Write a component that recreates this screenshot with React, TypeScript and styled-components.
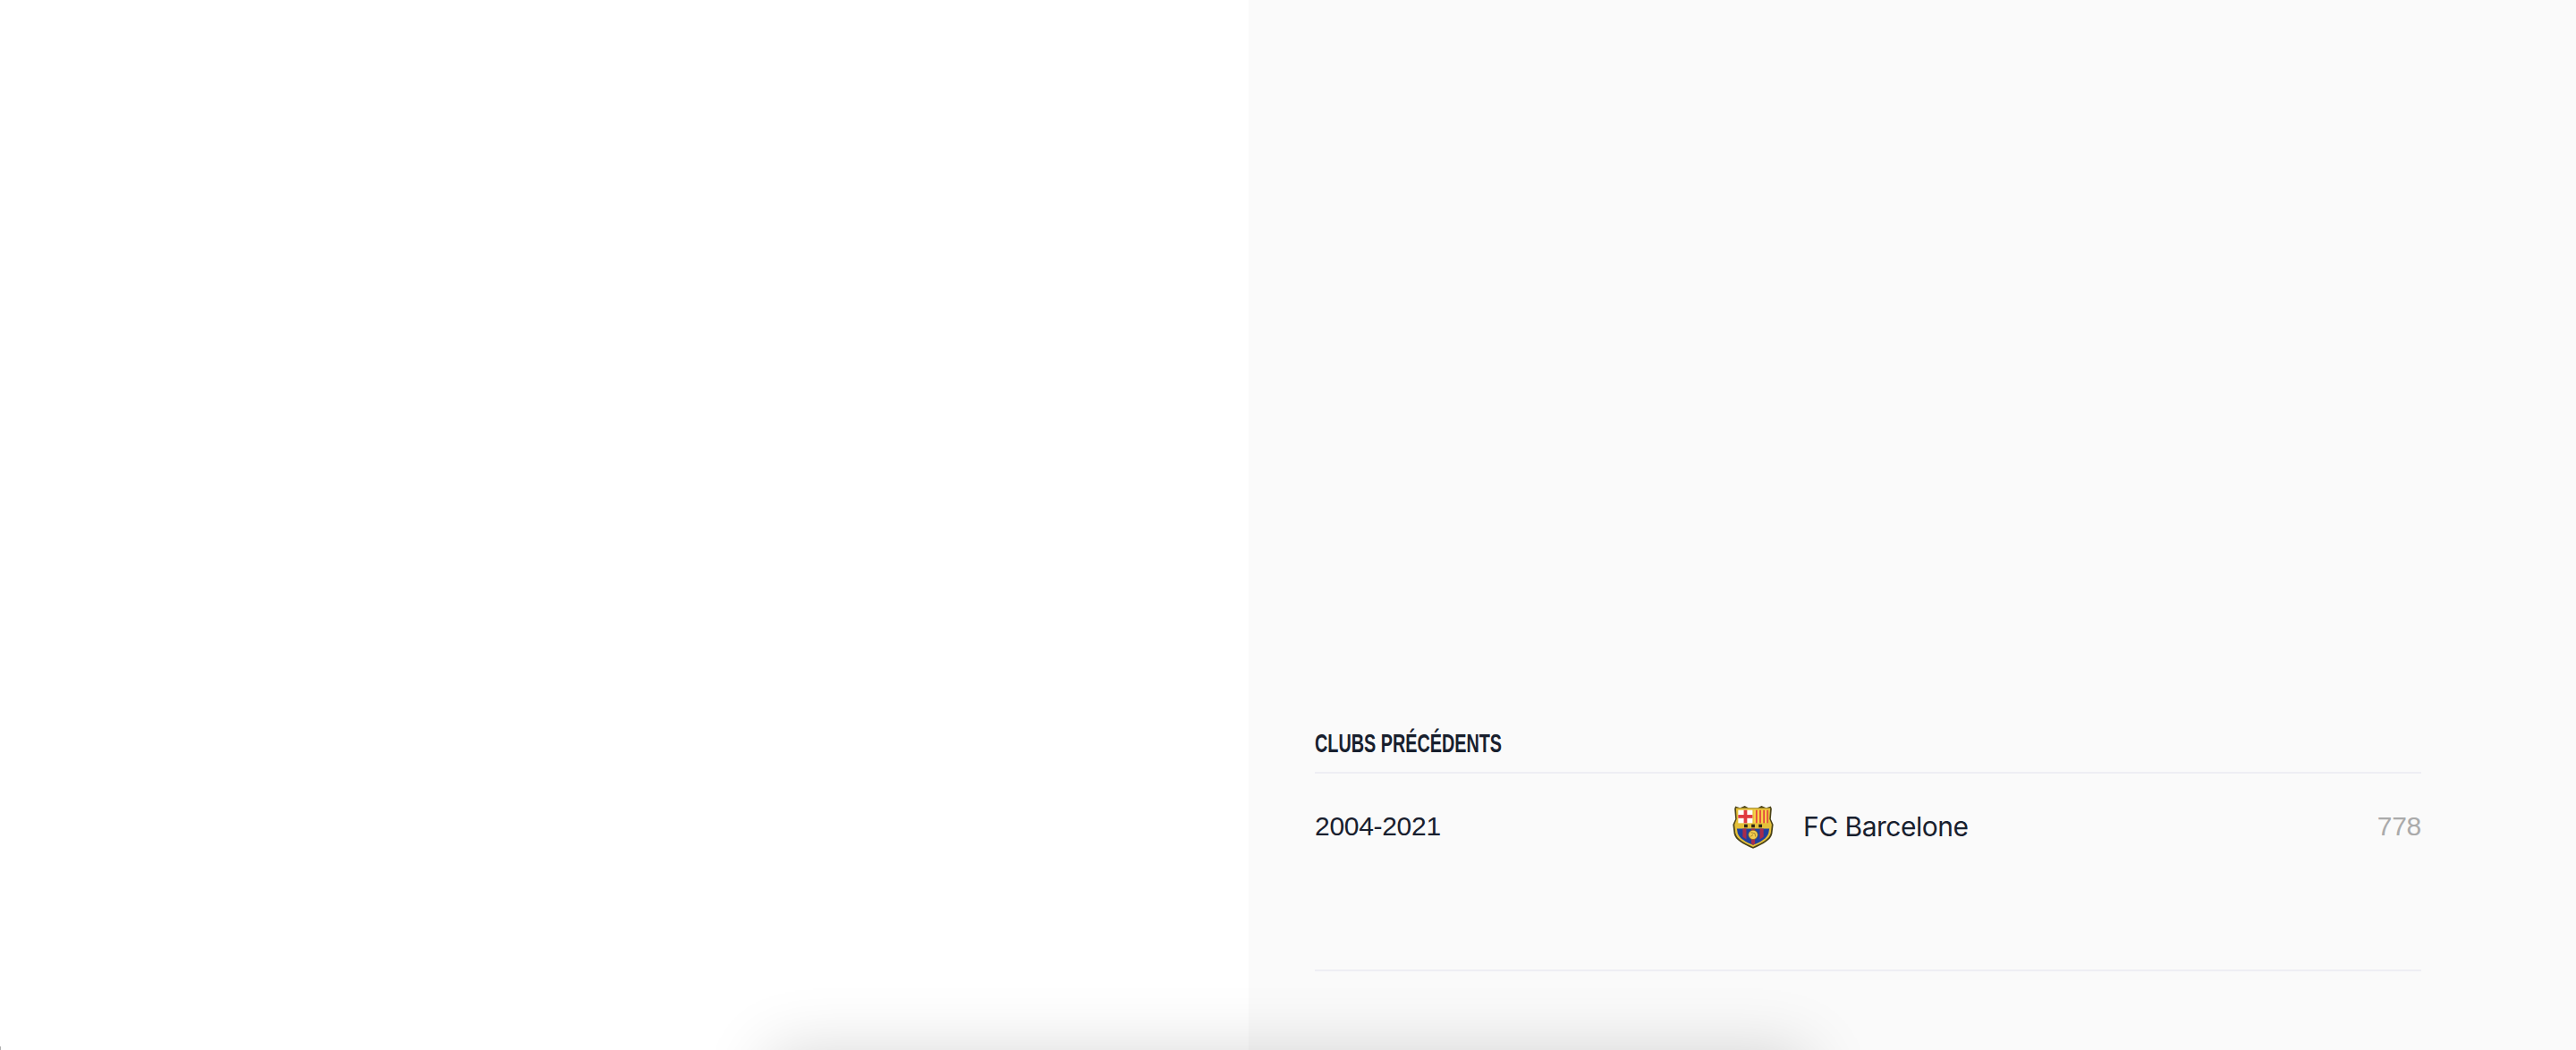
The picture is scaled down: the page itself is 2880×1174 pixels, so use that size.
import styled, { createGlobalStyle } from "styled-components";

const GlobalStyle = createGlobalStyle`
  html, body {
    margin: 0;
    padding: 0;
    background: #fff;
  }
  body {
    font-family: Inter, "Liberation Sans", sans-serif;
  }
`;

const BarcaCrest = () => (
  <CrestSvg viewBox="0 0 44 47" aria-label="FC Barcelone">
    <path
      d="M3 1.5 L8 3 L13 1 L17 3 L27 3 L31 1 L36 3 L41 1.5 L42 4 L41 15 L43.7 21 L42.5 31 C41 38 33 42 22 46.8 C11 42 3 38 1.5 31 L0.3 21 L3 15 L2 4 Z"
      fill="#4a4218"
    />
    <path
      d="M3.6 3.4 L40.4 3.4 L39.6 15 L42 21 L41 30 C39.5 37 31 41 22 45 C13 41 4.5 37 3 30 L2 21 L4.4 15 Z"
      fill="#e4c03a"
    />
    <rect x="6" y="5.5" width="15.4" height="14" fill="#fffdf8" />
    <rect x="12" y="5.5" width="3.6" height="14" fill="#e0393f" />
    <rect x="6" y="10.6" width="15.4" height="3.6" fill="#e0393f" />
    <rect x="22.8" y="5.5" width="15.4" height="14" fill="#f8d348" />
    <rect x="24.8" y="5.5" width="1.7" height="14" fill="#e2483f" />
    <rect x="28.8" y="5.5" width="1.7" height="14" fill="#e2483f" />
    <rect x="32.8" y="5.5" width="1.7" height="14" fill="#e2483f" />
    <rect x="36.6" y="5.5" width="1.6" height="14" fill="#e2483f" />
    <rect x="12.4" y="20.8" width="3.6" height="3.4" fill="#2a2618" />
    <rect x="20.2" y="20.8" width="3.6" height="3.4" fill="#2a2618" />
    <rect x="28" y="20.8" width="3.6" height="3.4" fill="#2a2618" />
    <path
      d="M4.6 25.4 L39.4 25.4 L38.6 30 C37 36 30 39.8 22 43 C14 39.8 7 36 5.4 30 Z"
      fill="#20409e"
    />
    <path d="M10.8 25.4 H14.8 V37 L10.8 34.4 Z" fill="#a82c4c" />
    <path d="M20 25.4 H24 V41.6 L22 43 L20 41.6 Z" fill="#a82c4c" />
    <path d="M29.2 25.4 H33.2 V34.4 L29.2 37 Z" fill="#a82c4c" />
    <circle cx="22" cy="32" r="5" fill="#f0cb4e" stroke="#7a5f18" strokeWidth="0.6" />
    <path d="M19.5 29.5 L24 30.5 L24.5 34 M22 32 L19 34" stroke="#7a5f18" strokeWidth="0.6" fill="none" />
  </CrestSvg>
);

export default function App() {
  return (
    <>
      <GlobalStyle />
      <Page>
        <LeftColumn />
        <RightColumn>
          <ClubsSection>
            <SectionHeader>
              <SectionTitle>CLUBS PRÉCÉDENTS</SectionTitle>
            </SectionHeader>
            <ClubRow>
              <Years>2004-2021</Years>
              <ClubCell>
                <BarcaCrest />
                <ClubName>FC Barcelone</ClubName>
              </ClubCell>
              <Apps>778</Apps>
            </ClubRow>
          </ClubsSection>
        </RightColumn>
        <BottomSheetShadow />
        <CornerSliver />
      </Page>
    </>
  );
}

const Page = styled.div`
  position: relative;
  display: grid;
  grid-template-columns: 1396px 1fr;
  height: 1174px;
  overflow: hidden;
`;

const LeftColumn = styled.div`
  background: #fff;
`;

const RightColumn = styled.div`
  background: #fafafa;
  padding: 810px 173px 0 74px;
`;

const ClubsSection = styled.section`
  border-bottom: 2px solid #eeeef4;
  height: 274px;
`;

const SectionHeader = styled.div`
  height: 53px;
  border-bottom: 2px solid #eeeef4;
`;

const SectionTitle = styled.h3`
  display: inline-block;
  margin: 0;
  color: #18202e;
  font-family: "Liberation Sans", Arial, sans-serif;
  font-size: 30px;
  line-height: 42px;
  font-weight: 700;
  white-space: nowrap;
  transform: scaleX(0.66);
  transform-origin: left center;
`;

const ClubRow = styled.div`
  display: flex;
  align-items: center;
  height: 118px;
  font-size: 30px;
`;

const Years = styled.span`
  width: 468px;
  color: #18202e;
  font-family: "Liberation Sans", Arial, sans-serif;
  letter-spacing: -0.3px;
`;

const ClubCell = styled.div`
  display: flex;
  align-items: center;
  flex: 1;
  gap: 33px;
`;

const CrestSvg = styled.svg`
  width: 46px;
  height: 49px;
  margin-left: -1px;
  flex-shrink: 0;
`;

const ClubName = styled.span`
  color: #18202e;
  letter-spacing: -0.5px;
`;

const Apps = styled.span`
  color: #aaaaaa;
  font-family: "Liberation Sans", Arial, sans-serif;
  letter-spacing: -0.3px;
`;

const BottomSheetShadow = styled.div`
  position: absolute;
  left: 880px;
  right: 880px;
  top: 1196px;
  height: 200px;
  box-shadow: 0 0 70px 20px rgba(0, 0, 0, 0.16);
`;

const CornerSliver = styled.div`
  position: absolute;
  left: 0;
  bottom: 0;
  width: 1px;
  height: 4px;
  background: #b0b0b0;
`;
